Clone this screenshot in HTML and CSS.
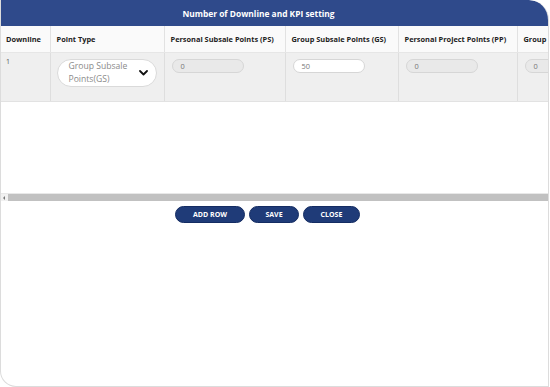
FILE: index.html
```html
<!DOCTYPE html>
<html>
<head>
<meta charset="utf-8">
<link rel="stylesheet" href="styles.css">
</head>
<body>
<div class="modal">
  <div class="modal-title">Number of Downline and KPI setting</div>
  <div class="table-area">
    <table class="kpi">
      <colgroup>
        <col style="width:49px"><col style="width:114px"><col style="width:121px"><col style="width:113px"><col style="width:119px"><col style="width:120px">
      </colgroup>
      <thead>
        <tr>
          <th>Downline</th>
          <th>Point Type</th>
          <th>Personal Subsale Points (PS)</th>
          <th>Group Subsale Points (GS)</th>
          <th>Personal Project Points (PP)</th>
          <th>Group Project Points (GP)</th>
        </tr>
      </thead>
      <tbody>
        <tr>
          <td class="num">1</td>
          <td>
            <div class="select">
              <span class="select-text">Group Subsale Points(GS)</span>
              <svg class="chev" width="9" height="6" viewBox="0 0 9 6"><path d="M1 1 L4.5 4.5 L8 1" fill="none" stroke="#111" stroke-width="1.8" stroke-linecap="round" stroke-linejoin="round"/></svg>
            </div>
          </td>
          <td><div class="input disabled">0</div></td>
          <td><div class="input">50</div></td>
          <td><div class="input disabled">0</div></td>
          <td><div class="input disabled">0</div></td>
        </tr>
      </tbody>
    </table>
  </div>
  <div class="scrollbar">
    <span class="arrow"></span>
    <span class="thumb"></span>
  </div>
  <div class="actions">
    <button class="btn btn-add">ADD ROW</button>
    <button class="btn btn-save">SAVE</button>
    <button class="btn btn-close">CLOSE</button>
  </div>
</div>
</body>
</html>
```
FILE: styles.css
```css
* { box-sizing: border-box; }
html, body { margin: 0; padding: 0; background: #ffffff; }
body {
  font-family: "Open Sans", "Liberation Sans", sans-serif;
  width: 550px;
  height: 387px;
  overflow: hidden;
}
.modal {
  width: 549px;
  height: 387px;
  border: 1px solid #dcdcdc;
  border-top: none;
  border-radius: 0 20px 0 16px;
  background: #fff;
  overflow: hidden;
  display: flex;
  flex-direction: column;
}
.modal-title {
  height: 26px;
  background: #2f4a8b;
  color: #fff;
  font-weight: 700;
  font-size: 8.4px;
  display: flex;
  align-items: center;
  justify-content: center;
  padding-right: 32px;
  margin: 0 -1px 0 -1px;
  border-radius: 0 20px 0 0;
}
.table-area {
  height: 167px;
  overflow: hidden;
}
.kpi {
  border-collapse: collapse;
  table-layout: fixed;
  width: 636px;
}
.kpi th {
  height: 26px;
  background: #fafafa;
  font-size: 7.4px;
  font-weight: 700;
  color: #222;
  text-align: left;
  padding: 0 6px;
  border-right: 1px solid #e2e2e2;
  border-bottom: 1px solid #e6e6e6;
  white-space: nowrap;
}
.kpi th:first-child { padding-left: 5px; }
.kpi td {
  height: 49px;
  background: #efefef;
  vertical-align: top;
  padding: 6px 6px 0 6px;
  border-right: 1px solid #dedede;
  border-bottom: 1px solid #e2e2e2;
  font-size: 7px;
  color: #555;
}
.kpi td.num { padding-left: 5px; padding-top: 4px; }
.select {
  width: 100px;
  height: 28px;
  background: #fff;
  border: 1px solid #dadada;
  border-radius: 14px;
  display: flex;
  align-items: center;
  padding: 0 8px 0 11px;
  justify-content: space-between;
}
.select-text {
  font-size: 8.6px;
  line-height: 13px;
  color: #8a8a8a;
  width: 68px;
}
.chev { flex: none; }
.input {
  width: 72px;
  height: 14px;
  border: 1px solid #d6d6d6;
  border-radius: 7px;
  background: #fff;
  font-size: 7.4px;
  color: #777;
  line-height: 12px;
  padding-left: 8px;
  margin-left: 1px;
}
.input.disabled { background: #e9e9e9; }
.scrollbar {
  height: 8px;
  display: flex;
  align-items: stretch;
  background: #f1f1f1;
  border-top: 1px solid #e8e8e8;
}
.arrow {
  width: 7px;
  position: relative;
}
.arrow::before {
  content: "";
  position: absolute;
  left: 2px;
  top: 2px;
  border-top: 2px solid transparent;
  border-bottom: 2px solid transparent;
  border-right: 2px solid #777;
}
.thumb {
  flex: 1;
  background: #c1c1c1;
}
.actions {
  display: flex;
  justify-content: center;
  gap: 4px;
  padding-top: 5px;
  padding-right: 14px;
}
.btn {
  height: 17px;
  border-radius: 9px;
  background: #1f3b78;
  border: 1px solid #142c62;
  color: #fff;
  font-family: "Open Sans", "Liberation Sans", sans-serif;
  font-weight: 700;
  font-size: 7px;
  padding: 0;
  cursor: pointer;
}
.btn-add { width: 70px; }
.btn-save { width: 50px; }
.btn-close { width: 57px; }
```
